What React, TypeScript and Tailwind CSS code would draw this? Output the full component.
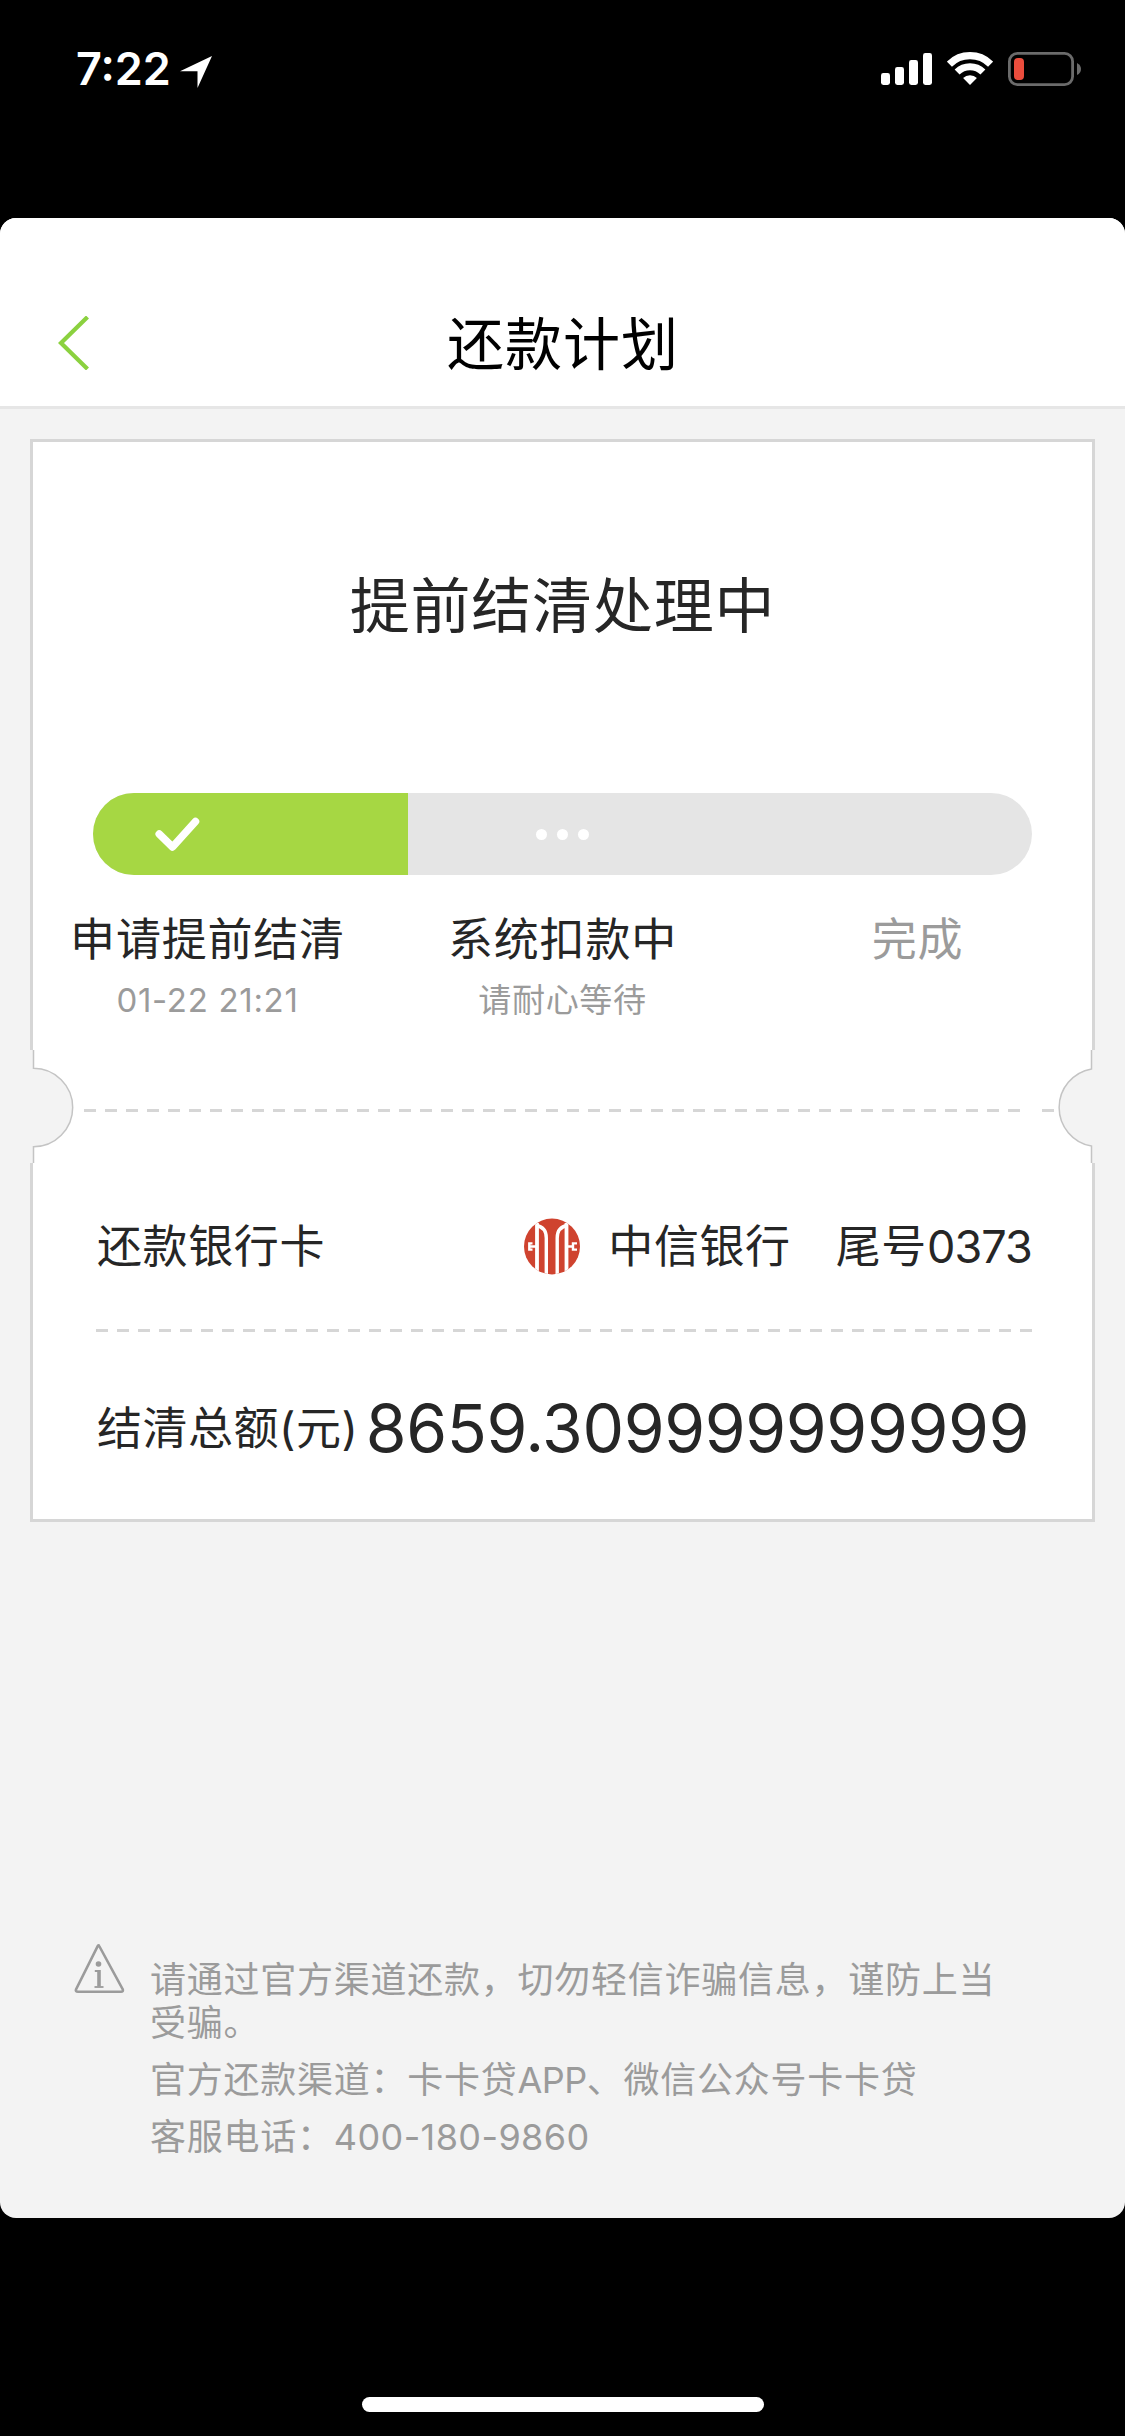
import React from 'react';

const steps = [
  { title: '申请提前结清', note: '01-22 21:21', done: true },
  { title: '系统扣款中', note: '请耐心等待', done: true },
  { title: '完成', note: '', done: false },
];

const StatusBar: React.FC = () => (
  <div className="flex h-[218px] items-start justify-between pl-[76px] pr-[44px]">
    <div className="flex items-start pt-[46px]">
      <span className="w-[104px] text-[45px] font-semibold leading-[46px] text-white whitespace-nowrap">7:22</span>
      <svg className="mt-[10px] h-8 w-8" viewBox="0 0 32 32" fill="#fff">
        <path d="M32 0L17.5 32V15.3H0z" />
      </svg>
    </div>
    <div className="flex items-start pt-[52px]">
      <svg className="h-[34px] w-[51px]" viewBox="0 0 51 34" fill="#fff">
        <rect x="0" y="21" width="9" height="12" rx="2.4" />
        <rect x="14" y="15" width="9" height="18" rx="2.4" />
        <rect x="28" y="8" width="9" height="25" rx="2.4" />
        <rect x="42" y="1" width="9" height="32" rx="2.4" />
      </svg>
      <svg className="ml-[15px] h-[34px] w-[46px]" viewBox="0 0 46 34" fill="none" stroke="#fff">
        <path d="M2.4 12.2A29.2 29.2 0 0 1 43.6 12.2" strokeWidth="7.2" />
        <path d="M10.1 20A18.3 18.3 0 0 1 35.9 20" strokeWidth="7" />
        <path d="M23 33L16.1 26.1A9.8 9.8 0 0 1 29.9 26.1z" fill="#fff" stroke="none" />
      </svg>
      <svg className="ml-[15px] h-[34px] w-[73px]" viewBox="0 0 73 34">
        <rect x="1.4" y="1.4" width="63.2" height="31.2" rx="8" fill="none" stroke="#6b6b6b" strokeWidth="2.8" />
        <rect x="6" y="6" width="10" height="22" rx="4" fill="#eb4d3d" />
        <path d="M69 11Q73 13 73 17T69 23z" fill="#6b6b6b" />
      </svg>
    </div>
  </div>
);

const BankLogo: React.FC = () => (
  <svg className="h-[57px] w-[57px]" viewBox="0 0 57 57">
    <defs>
      <clipPath id="disc"><circle cx="28" cy="28.5" r="28" /></clipPath>
    </defs>
    <g clipPath="url(#disc)">
      <rect width="57" height="57" fill="#cf432f" />
      <g fill="none" stroke="#fff">
        <path d="M13 5V57M42.5 5V57" strokeWidth="3.8" />
        <path d="M12 7.5C19 8.5 22.3 13 22.3 20V57" strokeWidth="3.4" />
        <path d="M43.5 7.5C36.5 8.5 33.2 13 33.2 20V57" strokeWidth="3.4" />
        <path d="M13 28.5H5.5M8.5 25.4H5.3V31.6H8.5" strokeWidth="2.4" />
        <path d="M42.5 28.5H49M53 25.4H49V31.6H53" strokeWidth="2.4" />
      </g>
    </g>
  </svg>
);

// half-round cutouts where the ticket would be torn
const LeftNotch: React.FC = () => (
  <svg className="absolute -left-[6px] top-[608px] h-[113px] w-[48px]" viewBox="0 0 48 113">
    <path d="M0 0H6V18.3A39.2 39.2 0 0 1 6 96.7V113H0z" fill="#f3f3f3" />
    <path d="M6.5 0V18.3A39.2 39.2 0 0 1 6.5 96.7V113" fill="none" stroke="#c4c4c4" strokeWidth="1.5" />
  </svg>
);

const RightNotch: React.FC = () => (
  <svg className="absolute -right-[6px] top-[608px] h-[113px] w-[48px]" viewBox="0 0 48 113">
    <path d="M48 0H42V18.8A39.2 39.2 0 0 0 42 96.2V113H48z" fill="#f3f3f3" />
    <path d="M41.5 0V18.9A39.2 39.2 0 0 0 41.5 96.1V113" fill="none" stroke="#c4c4c4" strokeWidth="1.5" />
  </svg>
);

const App: React.FC = () => {
  return (
    <div className="h-[2436px] w-[1125px] overflow-hidden bg-black font-['Inter','Noto_Sans_CJK_SC',sans-serif] text-[#262626]">
      <StatusBar />

      <div className="flex h-[2000px] flex-col overflow-hidden rounded-[16px] bg-[#f3f3f3]">
        <header className="flex h-[191px] shrink-0 items-start border-b-[3px] border-[#e6e6e6] bg-white pl-[58px] pt-[96px]">
          <svg className="mt-[2px] h-[54px] w-[31px]" viewBox="0 0 31 54" fill="none" stroke="#8bd13f" strokeWidth="4.2">
            <path d="M29.5 1L3 27L29.5 53" />
          </svg>
          <h1 className="ml-[358px] text-[57px] leading-[62px] tracking-[1px] text-black whitespace-nowrap">还款计划</h1>
        </header>

        <section className="relative mx-[30px] mt-[30px] h-[1083px] shrink-0 border-[3px] border-[#d6d6d6] bg-white">
          <h2 className="mt-[134px] text-center text-[60px] leading-[60px] tracking-[0.8px]">提前结清处理中</h2>

          <div className="mx-[60px] mt-[157px] flex h-[82px] items-center overflow-hidden rounded-full bg-[#e5e5e5]">
            <div className="flex h-full w-[315px] items-center bg-[#a6d743] pl-[62px]">
              <svg className="h-[34px] w-[45px]" viewBox="0 0 45 34" fill="none" stroke="#fff" strokeWidth="7.5" strokeLinecap="round" strokeLinejoin="round">
                <path d="M4.2 17L17.5 30L40.5 4.5" />
              </svg>
            </div>
            <div className="flex w-[309px] justify-center gap-[10px]">
              <span className="h-[11px] w-[11px] rounded-full bg-white" />
              <span className="h-[11px] w-[11px] rounded-full bg-white" />
              <span className="h-[11px] w-[11px] rounded-full bg-white" />
            </div>
          </div>

          <div className="-mx-[3px] mt-[42px] grid h-[100px] grid-cols-3 text-center">
            {steps.map((step) => (
              <div key={step.title}>
                <p className={`text-[45px] leading-[46px] tracking-[0.8px] ${step.done ? '' : 'text-[#9b9b9b]'}`}>{step.title}</p>
                <p className="mt-[20px] text-[33px] leading-[34px] tracking-[0.7px] text-[#9b9b9b]">{step.note}</p>
              </div>
            ))}
          </div>

          <div className="mt-[92px] flex h-[3px]">
            <div className="ml-[51px] w-[936px] bg-[repeating-linear-gradient(90deg,#d6d6d6_0_12px,transparent_12px_21px)]" />
            <div className="ml-[22px] w-[12px] bg-[#d6d6d6]" />
          </div>

          <div className="ml-[64px] mr-[60px] mt-[106px] flex h-[57px] items-center text-[45px] leading-[57px] tracking-[0.6px] whitespace-nowrap">
            <span>还款银行卡</span>
            <div className="ml-auto flex items-center">
              <BankLogo />
              <span className="ml-[27px]">中信银行</span>
              <span className="ml-[45px]">尾号<span className="tracking-[-0.9px]">0373</span></span>
            </div>
          </div>

          <div className="ml-[63px] mt-[54px] h-[3px] w-[936px] bg-[repeating-linear-gradient(90deg,#d6d6d6_0_12px,transparent_12px_21px)]" />

          <div className="ml-[64px] mr-[63px] mt-[63px] flex h-[66px] items-center justify-between whitespace-nowrap">
            <span className="pt-[2px] text-[45px] leading-[66px] tracking-[0.5px]">结清总额(元)</span>
            <span className="text-[66px] leading-[66px] tracking-[-0.4px]">8659.309999999999</span>
          </div>

          <LeftNotch />
          <RightNotch />
        </section>

        <footer className="mt-[422px] flex pl-[74px] text-[36px] leading-[43px] tracking-[0.75px] text-[#9b9b9b]">
          <svg className="h-[50px] w-[51px]" viewBox="0 0 51 50" fill="none" stroke="#9b9b9b">
            <path d="M25.2 2L48.8 45.5Q49.4 47.8 47 47.8H4Q1.2 47.8 2 45.5L23.8 2Q24.6 .8 25.2 2z" strokeWidth="2.6" />
            <circle cx="24.5" cy="20" r="2.8" fill="#9b9b9b" stroke="none" />
            <path d="M20.8 27H25" strokeWidth="2" />
            <path d="M25 26V42.5" strokeWidth="3.6" />
            <path d="M20.5 43H29.5" strokeWidth="1.8" />
          </svg>
          <div className="ml-[25px] w-[860px] pt-[15px]">
            <p>请通过官方渠道还款，切勿轻信诈骗信息，谨防上当受骗。</p>
            <p className="mt-[14px]">官方还款渠道：卡卡贷<span className="tracking-[-0.5px]">APP</span>、微信公众号卡卡贷</p>
            <p className="mt-[14px]">客服电话：<span className="tracking-[0.4px]">400-180-9860</span></p>
          </div>
        </footer>
      </div>

      <div className="mx-auto mt-[179px] h-[15px] w-[402px] rounded-full bg-white" />
    </div>
  );
};

export default App;
